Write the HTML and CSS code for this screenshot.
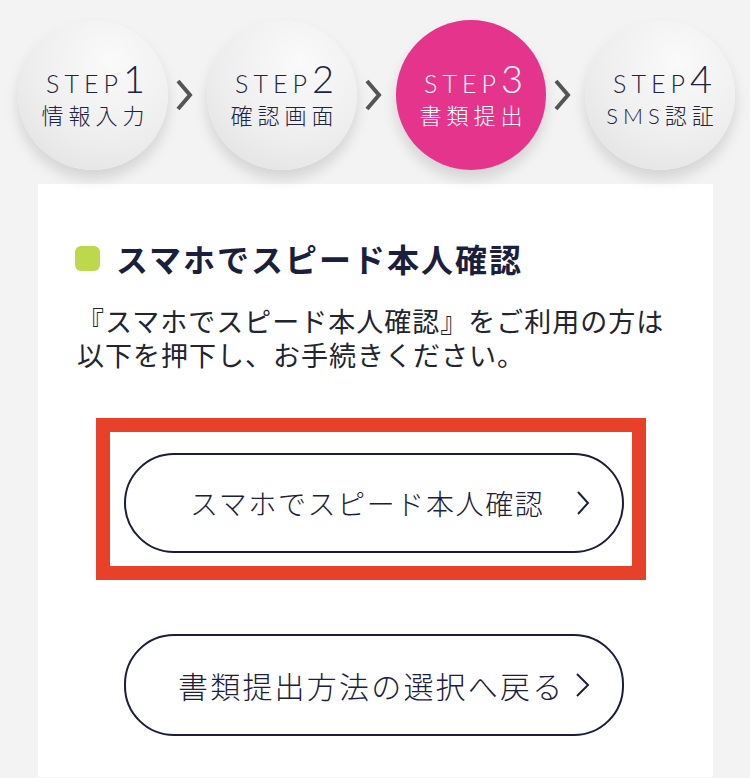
FILE: index.html
```html
<!DOCTYPE html>
<html>
<head>
    <title>書類提出</title>
    <link rel="stylesheet" href="styles.css">
</head>
<body>
    <div class="steps">
        <div class="step">
            <div class="step-label">STEP<span class="step-num">1</span></div>
            <div class="step-name">情報入力</div>
        </div>
        <svg class="step-arrow" width="18" height="34" viewBox="0 0 18 34"><polyline points="3,3 15,17 3,31" /></svg>
        <div class="step">
            <div class="step-label">STEP<span class="step-num">2</span></div>
            <div class="step-name">確認画面</div>
        </div>
        <svg class="step-arrow" width="18" height="34" viewBox="0 0 18 34"><polyline points="3,3 15,17 3,31" /></svg>
        <div class="step step-current">
            <div class="step-label">STEP<span class="step-num">3</span></div>
            <div class="step-name">書類提出</div>
        </div>
        <svg class="step-arrow" width="18" height="34" viewBox="0 0 18 34"><polyline points="3,3 15,17 3,31" /></svg>
        <div class="step">
            <div class="step-label">STEP<span class="step-num">4</span></div>
            <div class="step-name">SMS認証</div>
        </div>
    </div>

    <div class="card">
        <h2 class="section-title"><span class="title-mark"></span>スマホでスピード本人確認</h2>
        <p class="lead">『スマホでスピード本人確認』をご利用の方は<br>以下を押下し、お手続きください。</p>

        <div class="highlight">
            <a class="pill-button pill-primary" href="#">
                <span>スマホでスピード本人確認</span>
                <svg class="pill-arrow" width="14" height="26" viewBox="0 0 14 26"><polyline points="2,2 12,13 2,24" /></svg>
            </a>
        </div>

        <a class="pill-button pill-back" href="#">
            <span>書類提出方法の選択へ戻る</span>
            <svg class="pill-arrow" width="16" height="26" viewBox="0 0 16 26"><polyline points="2,2 13,13 2,24" /></svg>
        </a>
    </div>
</body>
</html>
```

FILE: styles.css
```css
body {
    margin: 0;
    padding: 0;
    background: #f3f3f3;
    font-family: "Noto Sans CJK JP", "Noto Sans", sans-serif;
    color: #1c2039;
    height: 778px;
    overflow: hidden;
}

.steps {
    display: flex;
    align-items: center;
    padding: 20px 0 0 18px;
    height: 150px;
}

.step {
    width: 150px;
    height: 150px;
    flex-shrink: 0;
    border-radius: 50%;
    background: radial-gradient(circle at 62% 28%, #fafafa 0%, #eeeeee 55%, #dfdfdf 100%);
    box-shadow: 0 9px 14px rgba(0, 0, 0, 0.13);
    display: flex;
    flex-direction: column;
    align-items: center;
    justify-content: center;
    color: #1e2340;
}

.step-current {
    background: #e5348b;
    color: #fff;
}

.step-label {
    font-family: Lato, "Noto Sans", sans-serif;
    font-weight: 300;
    font-size: 25px;
    letter-spacing: 5px;
    line-height: 38px;
    height: 38px;
    padding-left: 5px;
}

.step-num {
    font-size: 38px;
    font-weight: 300;
    letter-spacing: 0;
}

.step-name {
    font-family: Lato, "Noto Sans CJK JP", sans-serif;
    font-weight: 300;
    font-size: 22px;
    letter-spacing: 5px;
    line-height: 30px;
    margin-top: 4px;
    padding-left: 5px;
}

.step-arrow {
    flex-shrink: 0;
    margin: 0 14px 0 7px;
}

.step-arrow polyline {
    fill: none;
    stroke: #555;
    stroke-width: 4;
}

.card {
    background: #fff;
    margin: 14px 37px 0 38px;
    padding: 53px 37px 41px;
}

.section-title {
    display: flex;
    align-items: center;
    margin: 0;
    font-size: 32px;
    line-height: 42px;
    font-weight: bold;
    letter-spacing: 2px;
    color: #1b1f3b;
}

.title-mark {
    width: 25px;
    height: 25px;
    border-radius: 6px;
    background: #bdd84c;
    margin-right: 16px;
}

.lead {
    margin: 25px 0 0 2px;
    font-size: 27px;
    font-weight: 400;
    line-height: 34px;
    letter-spacing: 1px;
    color: #22242e;
}

.highlight {
    width: 550px;
    box-sizing: border-box;
    margin: 46px 0 0 21px;
    border: 14px solid #e8412a;
    padding: 21px 7px 13px 14px;
}

.pill-button {
    display: flex;
    align-items: center;
    box-sizing: border-box;
    width: 500px;
    height: 100px;
    border: 2px solid #1a1e36;
    border-radius: 50px;
    text-decoration: none;
    color: #1c2039;
    font-weight: 300;
}

.pill-primary {
    padding: 0 32px 0 64px;
    font-size: 28px;
    letter-spacing: 1.6px;
}

.pill-back {
    margin: 54px 0 0 49px;
    height: 102px;
    padding: 0 31px 0 52px;
    font-size: 30px;
    letter-spacing: 2.2px;
}

.pill-arrow {
    margin-left: auto;
}

.pill-arrow polyline {
    fill: none;
    stroke: #1c2039;
    stroke-width: 2;
}
```
